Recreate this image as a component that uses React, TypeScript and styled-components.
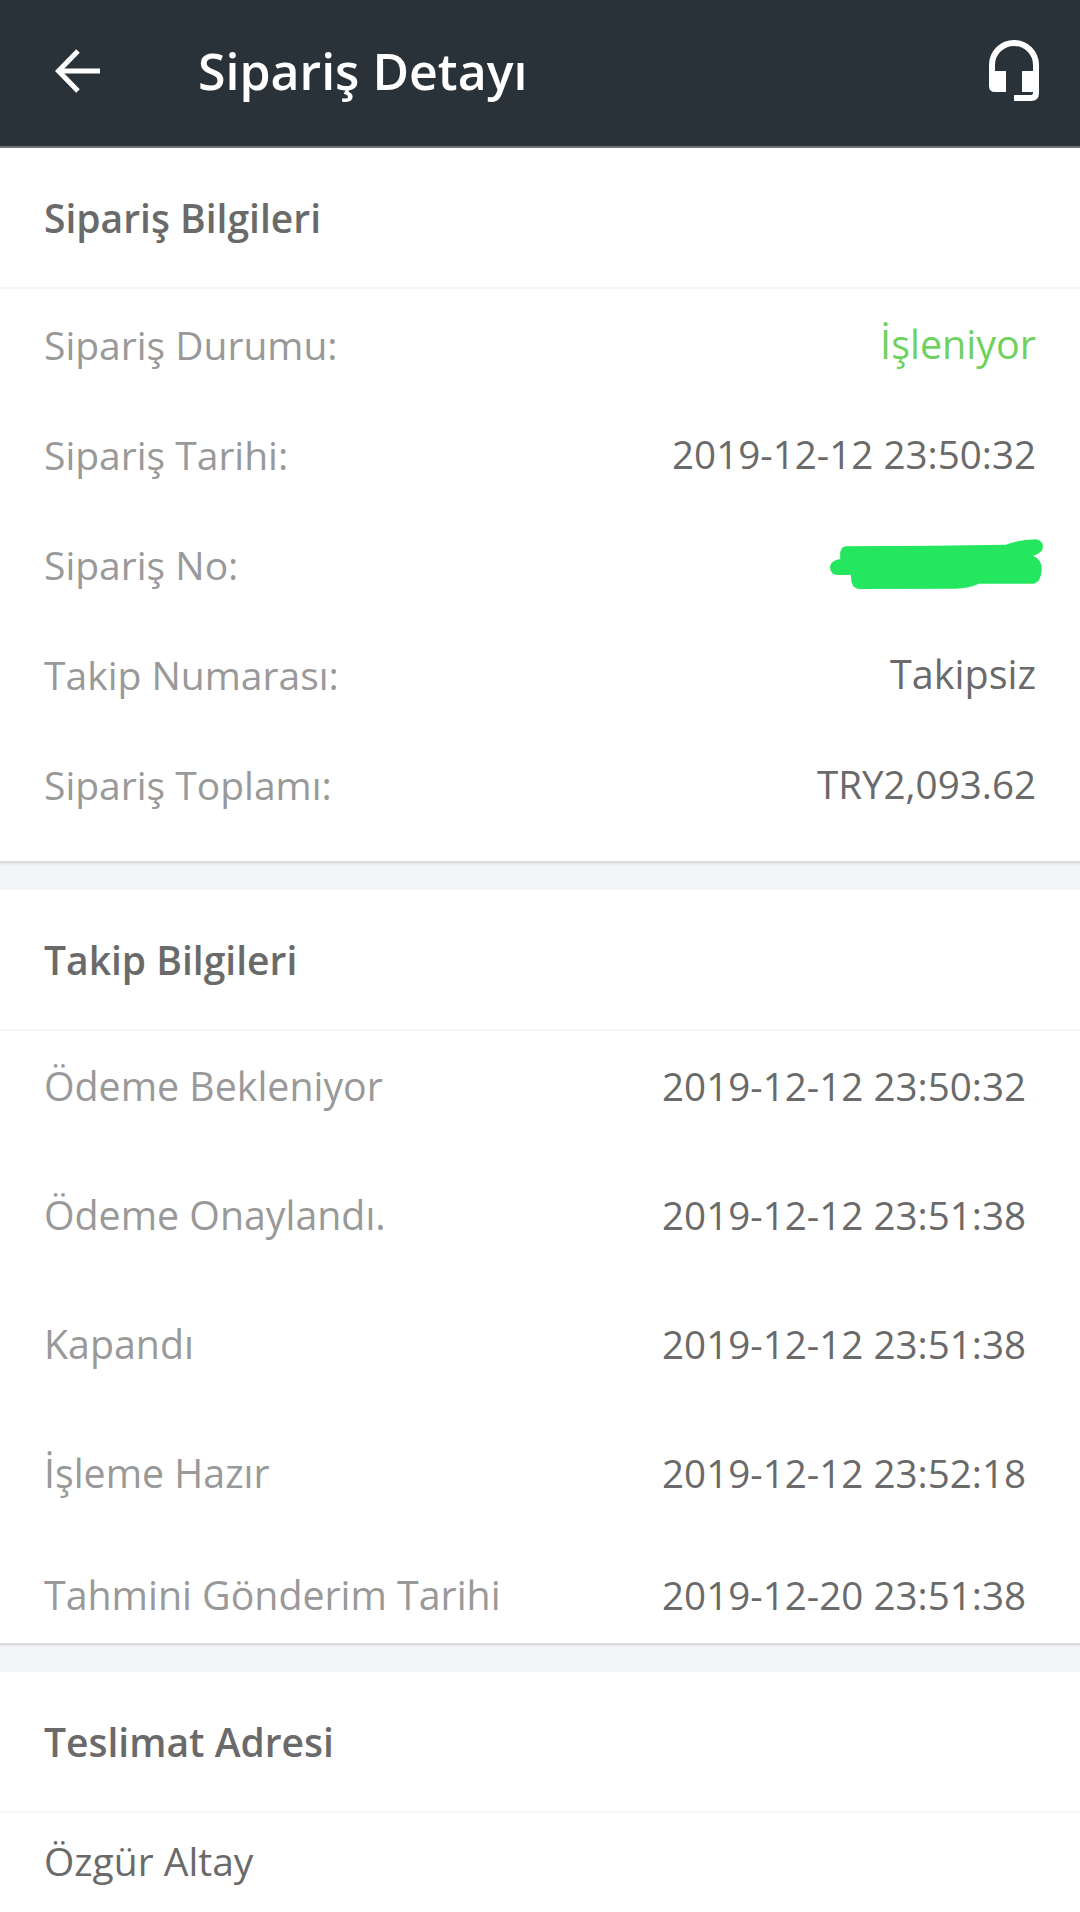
import React from "react"
import styled, { createGlobalStyle } from "styled-components"

const GlobalStyle = createGlobalStyle`
  html, body {
    margin: 0;
    padding: 0;
    background: #fff;
    font-family: "Open Sans", "Noto Sans", sans-serif;
  }
`

const Page = styled.div`
  width: 1080px;
  height: 1912px;
  overflow: hidden;
  background: #f4f5f7;
`

const TopBar = styled.header`
  height: 146px;
  background: #293239;
  border-bottom: 2px solid #6d7579;
  display: flex;
  align-items: center;
  padding: 0 41px 0 55px;
  color: #fff;
`

const BackButton = styled.button`
  border: none;
  background: transparent;
  padding: 0;
  width: 45px;
  height: 44px;
  display: flex;
  margin-bottom: 4px;
`

const Title = styled.h1`
  margin: 0 0 4px 98px;
  flex: 1;
  font-size: 50px;
  font-weight: 600;
  line-height: 60px;
  color: #fff;
`

const SupportButton = styled.button`
  border: none;
  background: transparent;
  padding: 0;
  width: 50px;
  height: 61px;
  display: flex;
  margin-bottom: 5px;
`

const Section = styled.section`
  background: #fff;
  margin-bottom: 27px;
  border-bottom: 2px solid #d9dbde;
  box-shadow: 0 1px 2px rgba(0, 0, 0, 0.08);
`

const SectionHead = styled.h2`
  margin: 0;
  height: 141px;
  box-sizing: border-box;
  border-bottom: 2px solid #f5f5f6;
  padding-left: 44px;
  display: flex;
  align-items: center;
  font-size: 39px;
  font-weight: 600;
  color: #6a6a6a;
`

const InfoList = styled.div`
  padding: 0 44px;
  height: 572px;
  box-sizing: border-box;
`

const InfoRow = styled.div`
  height: 110px;
  display: flex;
  align-items: center;
  justify-content: space-between;
  font-size: 39px;
`

const Label = styled.span`
  color: #999;
`

const Value = styled.span<{ $green?: boolean }>`
  font-size: 39.5px;
  color: ${(p) => (p.$green ? "#6fd25f" : "#6a6a6a")};
`

const DateValue = styled(Value)`
  font-size: 38.6px;
`

const TrackList = styled.div`
  padding: 29px 54px 0 44px;
`

const TrackRow = styled.div<{ $h: number }>`
  height: ${(p) => p.$h}px;
  display: flex;
  align-items: flex-start;
  justify-content: space-between;
  font-size: 39.3px;
  line-height: 52px;
`

const Address = styled.div`
  background: #fff;
  height: 240px;
  padding: 25px 44px 0;
  font-size: 39px;
  line-height: 46px;
  color: #6a6a6a;
`

const LastSection = styled.section`
  background: #fff;
`

const Scribble = styled.svg`
  width: 215px;
  height: 52px;
  display: block;
  margin-right: -8px;
`

const tracking = [
  { label: "Ödeme Bekleniyor", date: "2019-12-12 23:50:32", h: 129 },
  { label: "Ödeme Onaylandı.", date: "2019-12-12 23:51:38", h: 129 },
  { label: "Kapandı", date: "2019-12-12 23:51:38", h: 129 },
  { label: "İşleme Hazır", date: "2019-12-12 23:52:18", h: 122 },
  { label: "Tahmini Gönderim Tarihi", date: "2019-12-20 23:51:38", h: 74 },
]

export default function App() {
  return (
    <Page>
      <GlobalStyle />
      <TopBar>
        <BackButton aria-label="Geri">
          <svg width="45" height="44" viewBox="0 0 45 44" fill="none" stroke="#fff" strokeWidth="5">
            <path d="M23 2 L3.500 22 L23 42" />
            <path d="M4 22 H45" />
          </svg>
        </BackButton>
        <Title>Sipariş Detayı</Title>
        <SupportButton aria-label="Destek">
          <svg width="50" height="61" viewBox="0 0 50 61" fill="none">
            <path d="M3 33 V25 A22 22 0 0 1 47 25 V53 Q47 58 42 58 H25" stroke="#fff" strokeWidth="6" />
            <path d="M0 31 H17 V52 H6 Q0 52 0 46 Z" fill="#fff" />
            <path d="M33 31 H50 V52 H33 Z" fill="#fff" />
          </svg>
        </SupportButton>
      </TopBar>

      <Section>
        <SectionHead>Sipariş Bilgileri</SectionHead>
        <InfoList>
          <InfoRow>
            <Label>Sipariş Durumu:</Label>
            <Value $green>İşleniyor</Value>
          </InfoRow>
          <InfoRow>
            <Label>Sipariş Tarihi:</Label>
            <DateValue>2019-12-12 23:50:32</DateValue>
          </InfoRow>
          <InfoRow>
            <Label>Sipariş No:</Label>
            <Scribble viewBox="150 715 645 156">
              <path
                d="M200 740 L470 738 L680 735 Q720 720 770 719 Q792 722 792 742 Q790 762 762 768 Q790 780 788 812 Q784 850 765 852 L600 852 Q570 866 530 867 L240 868 Q214 866 216 826 L175 826 Q153 824 153 802 Q155 782 184 778 Q180 742 200 740 Z"
                fill="#25e65f"
              />
            </Scribble>
          </InfoRow>
          <InfoRow>
            <Label>Takip Numarası:</Label>
            <Value>Takipsiz</Value>
          </InfoRow>
          <InfoRow>
            <Label>Sipariş Toplamı:</Label>
            <DateValue>TRY2,093.62</DateValue>
          </InfoRow>
        </InfoList>
      </Section>

      <Section>
        <SectionHead>Takip Bilgileri</SectionHead>
        <TrackList>
          {tracking.map((t) => (
            <TrackRow key={t.label} $h={t.h}>
              <Label>{t.label}</Label>
              <DateValue>{t.date}</DateValue>
            </TrackRow>
          ))}
        </TrackList>
      </Section>

      <LastSection>
        <SectionHead>Teslimat Adresi</SectionHead>
        <Address>Özgür Altay</Address>
      </LastSection>
    </Page>
  )
}
